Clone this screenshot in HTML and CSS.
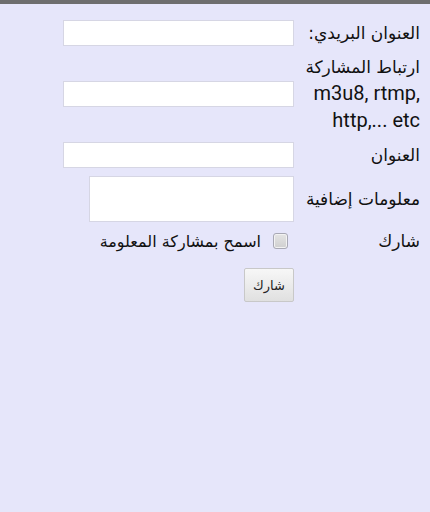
FILE: index.html
```html
<!DOCTYPE html>
<html lang="ar" dir="rtl">
<head>
<meta charset="utf-8">
<link rel="stylesheet" href="styles.css">
</head>
<body>
<div class="topbar"></div>
<form class="form">
  <div class="row">
    <label class="lbl">العنوان البريدي:</label>
    <div class="field"><input class="txt" type="text"></div>
  </div>
  <div class="row">
    <label class="lbl">ارتباط المشاركة<br><span class="latin">m3u8, rtmp, http,... etc</span></label>
    <div class="field"><input class="txt" type="text"></div>
  </div>
  <div class="row">
    <label class="lbl">العنوان</label>
    <div class="field"><input class="txt" type="text"></div>
  </div>
  <div class="row">
    <label class="lbl">معلومات إضافية</label>
    <div class="field"><textarea class="area"></textarea></div>
  </div>
  <div class="row row-check">
    <label class="lbl">شارك</label>
    <div class="field check"><input class="cb" type="checkbox"><span class="cblabel">اسمح بمشاركة المعلومة</span></div>
  </div>
  <div class="row row-btn">
    <div class="lbl"></div>
    <div class="field"><button class="btn" type="button">شارك</button></div>
  </div>
</form>
</body>
</html>
```
FILE: styles.css
```css
html, body {
  margin: 0;
  padding: 0;
  background: #e6e6fa;
  height: 100%;
}
body {
  font-family: "DejaVu Sans", sans-serif;
  color: #111;
  font-size: 16px;
}
.topbar {
  height: 4px;
  background: #6e6e6e;
}
.form {
  display: flex;
  flex-direction: column;
  padding: 16px 10px 0 0;
  gap: 8px;
}
.row {
  display: flex;
  align-items: center;
  gap: 10px;
}
.lbl {
  width: 116px;
  flex: none;
  text-align: right;
  line-height: 26px;
  font-size: 17px;
}
.latin {
  font-family: Roboto, "Noto Sans", sans-serif;
  font-size: 20px;
  line-height: 26px;
}
.field {
  display: flex;
  align-items: center;
}
.txt {
  box-sizing: border-box;
  width: 231px;
  height: 26px;
  border: 1px solid #d6d6e4;
  background: #fff;
  margin: 0;
  padding: 0;
}
.area {
  box-sizing: border-box;
  width: 205px;
  height: 46px;
  border: 1px solid #d6d6e4;
  background: #fff;
  margin: 0;
  padding: 0;
  resize: none;
  display: block;
}
.row-check .lbl {
  line-height: 22px;
}
.check {
  gap: 12px;
  width: 231px;
}
.cb {
  -webkit-appearance: none;
  appearance: none;
  box-sizing: border-box;
  margin: 0 6px 0 0;
  width: 15px;
  height: 16px;
  border: 1px solid #a8a8b4;
  border-radius: 3px;
  background: linear-gradient(#e4e4e4, #cfcfcf);
  box-shadow: inset 0 0 0 1px #f2f2f2;
}
.cblabel {
  font-family: "DejaVu Sans", sans-serif;
  font-size: 16px;
}
.row-btn {
  margin-top: 8px;
}
.btn {
  width: 50px;
  height: 34px;
  font-family: "DejaVu Sans", sans-serif;
  font-size: 13px;
  background: linear-gradient(#f7f7f7, #e0e0e0);
  border: 1px solid #c8c8c8;
  border-radius: 2px;
  color: #222;
  padding: 0;
}
```
